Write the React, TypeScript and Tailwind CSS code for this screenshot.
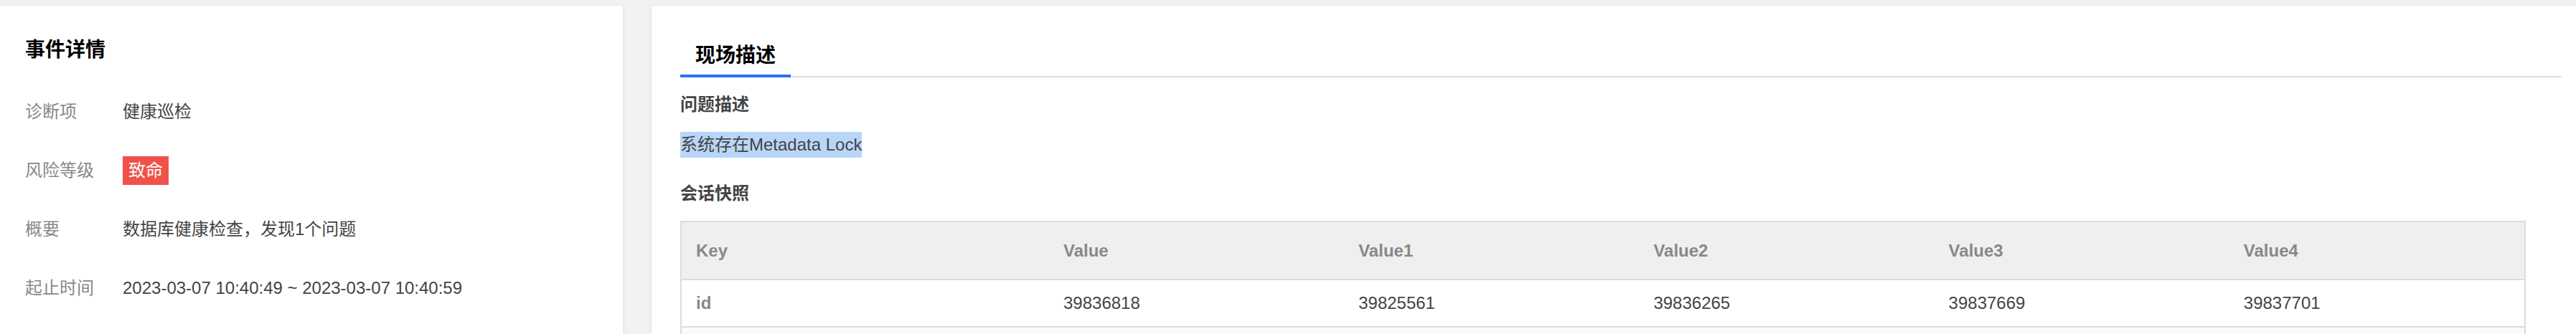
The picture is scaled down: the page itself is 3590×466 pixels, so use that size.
import React from "react";

const font = { fontFamily: '"Liberation Sans", "Noto Sans CJK SC", sans-serif' };

const rows: { label: string; value: React.ReactNode }[] = [
  { label: "诊断项", value: "健康巡检" },
  {
    label: "风险等级",
    value: (
      <span className="inline-flex h-[40px] items-center bg-[#f0524a] px-[8px] text-white">致命</span>
    ),
  },
  { label: "概要", value: "数据库健康检查，发现1个问题" },
  { label: "起止时间", value: "2023-03-07 10:40:49 ~ 2023-03-07 10:40:59" },
];

const headers = ["Key", "Value", "Value1", "Value2", "Value3", "Value4"];
const dataRow = ["id", "39836818", "39825561", "39836265", "39837669", "39837701"];

export default function App() {
  return (
    <div
      className="flex h-[466px] w-[3590px] overflow-hidden bg-[#f2f2f2] pt-[8px]"
      style={font}
    >
      {/* Left card */}
      <div className="flex w-[868px] shrink-0 flex-col bg-white pl-[35px] pt-[42px] shadow-[1px_0_4px_rgba(0,0,0,0.08)]">
        <div className="text-[28px] font-bold leading-[40px] text-black">事件详情</div>
        <div className="mt-[25px] flex flex-col">
          {rows.map((r) => (
            <div key={r.label} className="flex h-[82px] items-center text-[24px]">
              <div className="w-[136px] shrink-0 text-[#888]">{r.label}</div>
              <div className="text-[#444]">{r.value}</div>
            </div>
          ))}
        </div>
      </div>

      {/* Right card */}
      <div className="ml-[40px] flex flex-1 flex-col bg-white pl-[40px] pr-[20px] pt-[50px] shadow-[-1px_0_4px_rgba(0,0,0,0.08)]">
        <div className="flex border-b-2 border-[#dcdcdc]">
          <div className="-mb-[2px] border-b-4 border-[#2d6ff0] px-[21px] pb-[6px] text-[28px] font-bold leading-[40px] text-black">
            现场描述
          </div>
        </div>

        <div className="mt-[20px] text-[24px] font-bold leading-[36px] text-[#444]">问题描述</div>
        <div className="mt-[20px] flex">
          <span className="bg-[#b9d6f9] text-[24px] leading-[36px] text-[#444]">系统存在Metadata Lock</span>
        </div>
        <div className="mt-[32px] text-[24px] font-bold leading-[36px] text-[#444]">会话快照</div>

        <div className="mt-[20px] w-[2572px] border-x-2 border-t-2 border-[#dcdcdc] text-[24px]">
          <div className="grid h-[81px] grid-cols-[512px_repeat(5,1fr)] items-center border-b-2 border-[#dcdcdc] bg-[#efefef]">
            {headers.map((h) => (
              <div key={h} className="pl-[20px] font-bold text-[#888]">
                {h}
              </div>
            ))}
          </div>
          <div className="grid h-[66px] grid-cols-[512px_repeat(5,1fr)] items-center border-b-2 border-[#dcdcdc] bg-white">
            {dataRow.map((d, i) => (
              <div key={i} className={i === 0 ? "pl-[20px] font-bold text-[#888]" : "pl-[20px] text-[#444]"}>
                {d}
              </div>
            ))}
          </div>
          <div className="h-[66px] bg-[#fafafa]" />
        </div>
      </div>
    </div>
  );
}
